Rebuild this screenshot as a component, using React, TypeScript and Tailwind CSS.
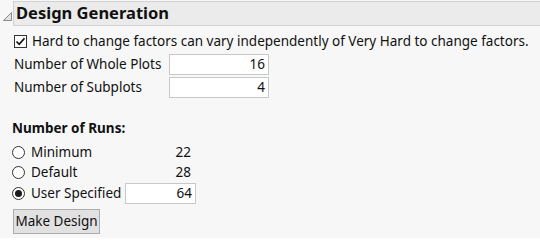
import React from "react";

const font = { fontFamily: '"Noto Sans", "Open Sans", sans-serif' };

function Radio({ checked }: { checked?: boolean }) {
  return (
    <span className="flex h-[13px] w-[13px] items-center justify-center rounded-full border border-[#333] bg-white">
      {checked && <span className="h-[7px] w-[7px] rounded-full bg-[#1a1a1a]" />}
    </span>
  );
}

function NumBox({ value, w }: { value: string; w: string }) {
  return (
    <div className={`${w} h-[21px] border border-[#c8c8c8] bg-white pr-[3px] text-right text-[13.5px] leading-[19px] text-[#111]`}>
      {value}
    </div>
  );
}

export default function App() {
  const runs = [
    { label: "Minimum", value: "22" },
    { label: "Default", value: "28" },
  ];
  return (
    <div className="h-[238px] w-[540px] overflow-hidden bg-[#f7f7f7] text-[#111]" style={font}>
      {/* header */}
      <div className="flex items-start pt-[1px]">
        <div className="flex w-[13px] justify-start pl-[3px] pt-[11px]">
          <svg width="9" height="9" viewBox="0 0 9 9">
            <path d="M8.5 0.5 L8.5 8.5 L0.5 8.5 Z" fill="#e4e4e4" stroke="#8a8a8a" strokeWidth="1" />
          </svg>
        </div>
        <div className="h-[25px] flex-1 border border-r-0 border-[#d2d2d2] bg-[#ebebeb] pl-[2px] text-[16.5px] font-bold leading-[22px]">
          Design Generation
        </div>
      </div>

      <div className="pl-[14px] pt-[7px] text-[13.5px]">
        <label className="flex items-center gap-[5px] leading-[16px]">
          <span className="flex h-[13px] w-[13px] items-center justify-center border border-[#333] bg-white">
            <svg width="11" height="11" viewBox="0 0 11 11">
              <path d="M1.5 5.5 L4.2 8.3 L9.5 2.2" fill="none" stroke="#111" strokeWidth="1.7" />
            </svg>
          </span>
          Hard to change factors can vary independently of Very Hard to change factors.
        </label>

        <div className="mt-[5px] grid grid-cols-[155px_100px] gap-y-[2px]">
          <div className="leading-[21px]">Number of Whole Plots</div>
          <NumBox value="16" w="w-[100px]" />
          <div className="leading-[21px]">Number of Subplots</div>
          <NumBox value="4" w="w-[100px]" />
        </div>

        <div className="-ml-[2px] mt-[21px] font-bold leading-[18px]">Number of Runs:</div>

        <div className="-ml-[2px] mt-[5px] flex flex-col">
          {runs.map((r) => (
            <div key={r.label} className="flex h-[20px] items-center">
              <Radio />
              <span className="ml-[6px] w-[120px]">{r.label}</span>
              <span className="w-[40px] text-right">{r.value}</span>
            </div>
          ))}
          <div className="flex h-[22px] items-center">
            <Radio checked />
            <span className="ml-[6px] w-[94px]">User Specified</span>
            <NumBox value="64" w="w-[71px]" />
          </div>
        </div>

        <button className="-ml-[1px] mt-[5px] h-[25px] w-[87px] border border-[#adadad] bg-[#e1e1e1] text-[13.5px] leading-[23px]">
          Make Design
        </button>
      </div>
    </div>
  );
}
